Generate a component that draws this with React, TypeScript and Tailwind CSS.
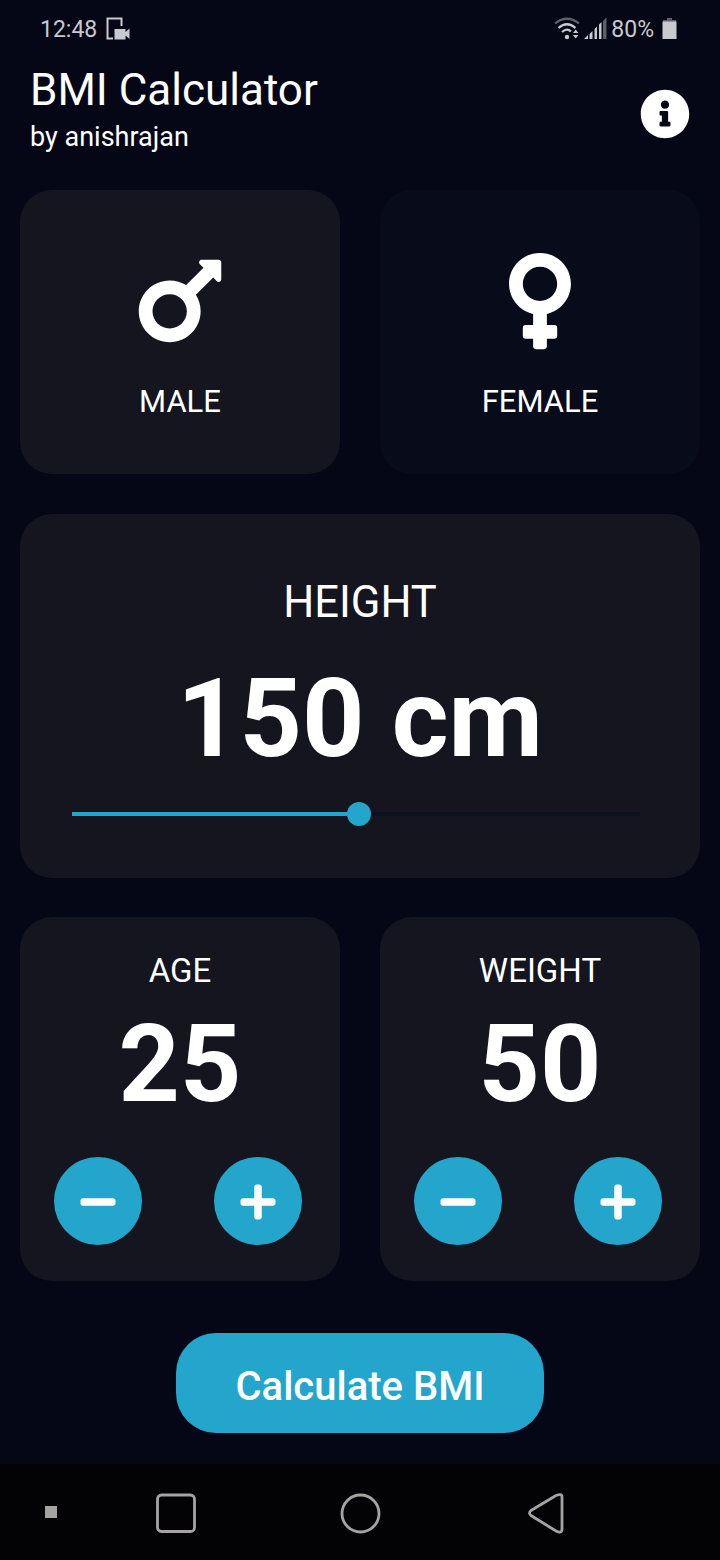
import type { ReactNode } from "react";
import { FaInfoCircle, FaMars, FaVenus, FaMinus, FaPlus } from "react-icons/fa";

function StatusBar() {
  return (
    <div className="flex h-[58px] shrink-0 items-center justify-between pl-10 pr-[43px] text-[23px] leading-none text-[#c9c9cf]">
      <div className="flex items-center gap-[9px]">
        <span>12:48</span>
        <svg width="24" height="24" viewBox="0 0 24 24" fill="none">
          <path d="M7 21.500H1.500V1.500H15.500V9" stroke="currentColor" strokeWidth="2" />
          <path d="M8.500 12h11v3l4-3.500v10.500l-4-3.500v4h-11z" fill="currentColor" />
        </svg>
      </div>
      <div className="flex items-center">
        <svg width="26" height="24" viewBox="0 0 26 24" fill="none" stroke="currentColor" strokeWidth="2.2">
          <path d="M1 6.500Q13-3 25 6.500" opacity=".45" />
          <path d="M4.500 11Q13 3.500 21.500 11" />
          <path d="M8 15Q13 10.500 17 14.500" />
          <circle cx="13" cy="20" r="2.200" fill="currentColor" stroke="none" />
          <path d="M19 16l2.700-3.500 2.700 3.500zM19 18l2.700 3.500 2.700-3.500z" fill="currentColor" stroke="none" />
        </svg>
        <svg className="ml-1" width="23" height="24" viewBox="0 0 23 24" fill="currentColor">
          <path d="M0 22l4-4v4zM5.500 17l3-3v8h-3zM10.500 12l2.500-2.500V22h-2.500zM15 7.500L17.500 5v17H15z" />
          <path d="M19 4l3.500-3.500V22H19z" opacity=".45" />
        </svg>
        <span className="ml-[4px]">80%</span>
        <svg className="ml-[8px]" width="15" height="24" viewBox="0 0 15 24" fill="currentColor">
          <path d="M1 3h4V1h5v2h4v2H1z" opacity=".45" />
          <path d="M.5 4.500h14V22H.5z" />
        </svg>
      </div>
    </div>
  );
}

function GenderCard({ label, className, children }: { label: string; className: string; children: ReactNode }) {
  return (
    <button className={`flex h-[284px] w-80 flex-col items-center rounded-[32px] pt-[60px] ${className}`}>
      <span className="flex h-[102px] items-center">{children}</span>
      <span className="mt-[31px] text-[31px] leading-[38px]">{label}</span>
    </button>
  );
}

function Counter({ label, value }: { label: string; value: number }) {
  return (
    <section className="flex h-[364px] w-80 flex-col items-center rounded-[32px] bg-[#14151e] pt-[34px]">
      <h2 className="text-[33px] leading-10">{label}</h2>
      <p className="mt-[11px] text-[107px] font-bold leading-[126px]">{value}</p>
      <div className="mt-[29px] flex w-full justify-between pl-[34px] pr-[38px]">
        <button aria-label={`Decrease ${label}`} className="flex size-[88px] items-center justify-center rounded-full bg-[#24a6cc]">
          <FaMinus size={40} className="translate-y-px" />
        </button>
        <button aria-label={`Increase ${label}`} className="flex size-[88px] items-center justify-center rounded-full bg-[#24a6cc]">
          <FaPlus size={40} className="translate-y-px" />
        </button>
      </div>
    </section>
  );
}

export default function App() {
  return (
    <div className="flex h-[1560px] w-[720px] flex-col overflow-hidden bg-[#050716] font-['Roboto',sans-serif] text-white">
      <StatusBar />
      <header className="flex h-[132px] shrink-0 items-start justify-between pl-[30px] pr-[30px] pt-[6px]">
        <div>
          <h1 className="text-[44px] leading-[52px]">BMI Calculator</h1>
          <p className="mt-[5px] text-[27px] leading-8">by anishrajan</p>
        </div>
        <FaInfoCircle size={50} className="mt-[25px]" />
      </header>
      <main className="flex flex-1 flex-col items-center px-5">
        <div className="flex w-full justify-between">
          <GenderCard label="MALE" className="bg-[#14151e]"><FaMars size={110} /></GenderCard>
          <GenderCard label="FEMALE" className="bg-[#080b19]"><FaVenus size={110} /></GenderCard>
        </div>
        <section className="mt-10 flex h-[364px] w-full flex-col rounded-[32px] bg-[#14151e] pt-[63px]">
          <h2 className="text-center text-[43.500px] leading-[52px]">HEIGHT</h2>
          <p className="mt-6 text-center text-[109px] font-bold leading-[132px]">150 cm</p>
          <div className="ml-[52px] mt-[17px] flex h-6 w-[568px] items-center">
            <div className="h-1 w-[275px] bg-[#24a6cc]" />
            <div className="size-6 rounded-full bg-[#24a6cc]" />
            <div className="h-1 flex-1 bg-[#0a101c]" />
          </div>
        </section>
        <div className="mt-[39px] flex w-full justify-between">
          <Counter label="AGE" value={25} />
          <Counter label="WEIGHT" value={50} />
        </div>
        <button className="mt-[52px] h-[100px] w-[368px] rounded-[40px] bg-[#24a6cc] pt-[8px] text-[40px] font-medium">Calculate BMI</button>
      </main>
      <nav className="flex h-[96px] shrink-0 items-center bg-[#030305] text-[#a6a4a3]">
        <div className="ml-[45px] size-3 bg-current" />
        <svg className="ml-[98px] mt-px" width="42" height="42" viewBox="0 0 42 42" fill="none" stroke="currentColor" strokeWidth="2.800">
          <rect x="2.500" y="3" width="37" height="36.500" rx="4" />
        </svg>
        <svg className="ml-[143px] mt-px" width="42" height="42" viewBox="0 0 42 42" fill="none" stroke="currentColor" strokeWidth="2.800">
          <circle cx="20.500" cy="21.500" r="18.500" />
        </svg>
        <svg className="ml-[145px] mt-px" width="42" height="42" viewBox="0 0 42 42" fill="none" stroke="currentColor" strokeWidth="2.800">
          <path d="M4 18.500L29 3.500Q35 1 35 5V37Q35 42 29 39L4 23.500Q1 21 4 18.500Z" />
        </svg>
      </nav>
    </div>
  );
}
